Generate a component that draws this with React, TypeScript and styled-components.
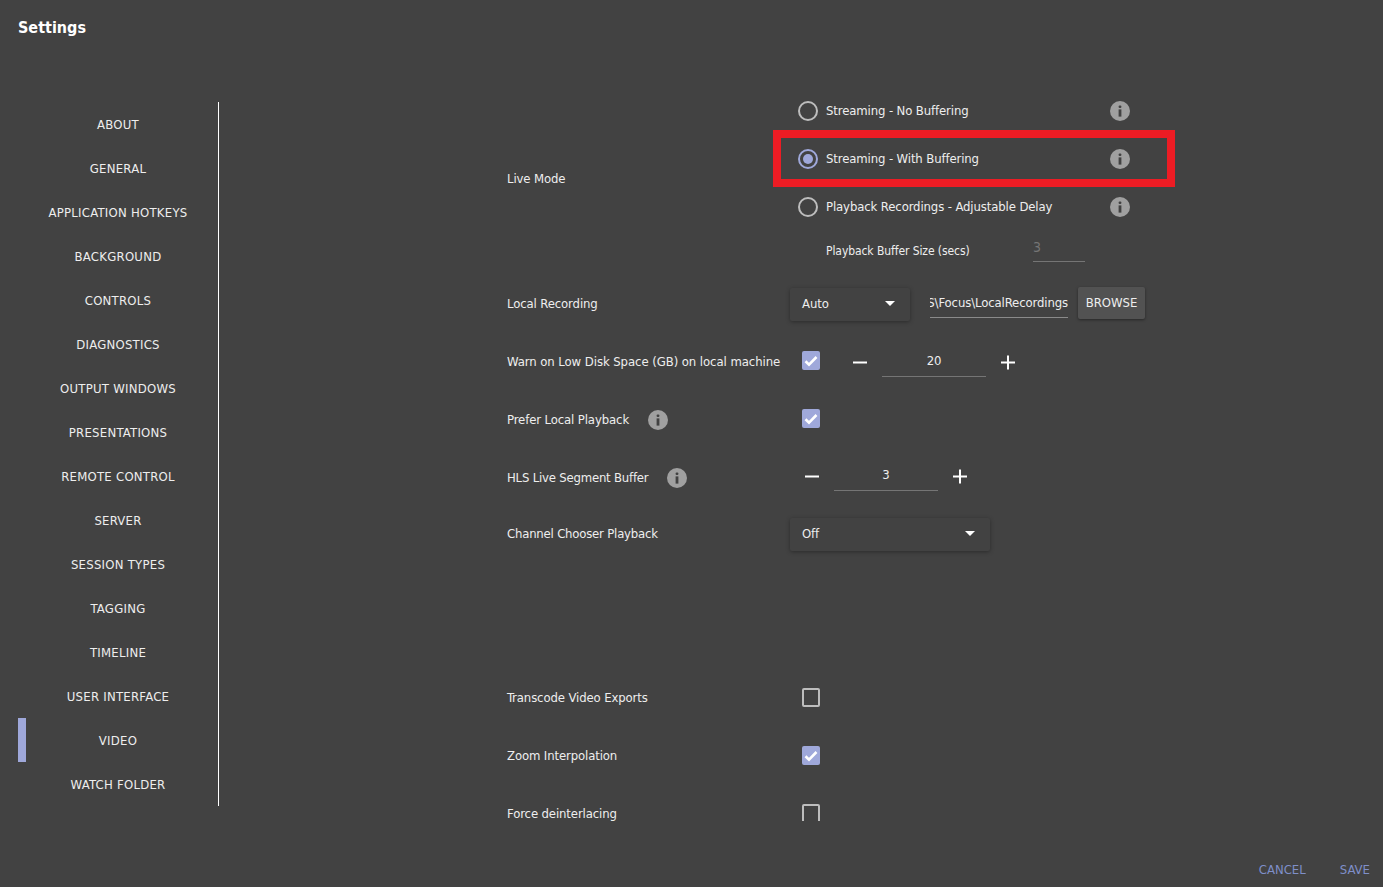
import React from 'react'
import styled, { createGlobalStyle } from 'styled-components';

const GlobalStyle = createGlobalStyle`
    html, body {
        margin: 0;
        padding: 0;
        background: #424242;
    }
    * {
        box-sizing: border-box;
    }
`

const Page = styled.div`
    width: 1383px;
    height: 887px;
    display: flex;
    flex-direction: column;
    overflow: hidden;
    background: #424242;
    color: #eeeeee;
    font-family: "DejaVu Sans", "Noto Sans", sans-serif;
    font-stretch: condensed;
    font-size: 13px;
    letter-spacing: -0.12px;
`

const Header = styled.h1`
    height: 87px;
    margin: 0;
    padding: 18px 0 0 18px;
    font-size: 16px;
    line-height: 20px;
    font-weight: 700;
    letter-spacing: 0;
    color: #ffffff;
`

const Body = styled.div`
    height: 734px;
    display: flex;
`

const Sidebar = styled.nav`
    width: 219px;
    height: 704px;
    margin-top: 15px;
    padding-left: 18px;
    border-right: 1px solid #ffffff;
    letter-spacing: 0.25px;
`

const NavItem = styled.div<{ $active?: boolean }>`
    height: 44px;
    display: flex;
    align-items: center;
    justify-content: center;
    border-left: 8px solid ${p => (p.$active ? '#9fa8da' : 'transparent')};
    padding-right: 8px;
`

const Content = styled.main`
    flex: 1;
    overflow: hidden;
    padding-left: 288px;
`

const Row = styled.div<{ $height: number; $after?: number }>`
    height: ${p => p.$height}px;
    margin-bottom: ${p => p.$after ?? 0}px;
    display: grid;
    grid-template-columns: 283px 1fr;
    align-items: center;
`

const Label = styled.div<{ $tracking?: number }>`
    display: flex;
    align-items: center;
    gap: 19px;
    padding-bottom: 1px;
    letter-spacing: ${p => p.$tracking ?? -0.12}px;
`

const Controls = styled.div<{ $inset?: number }>`
    display: flex;
    align-items: center;
    padding-left: ${p => p.$inset ?? 0}px;
`

const RadioRow = styled.div`
    position: relative;
    width: 340px;
    height: 48px;
    padding-left: 8px;
    display: flex;
    align-items: center;
`

const Highlight = styled.div`
    position: absolute;
    left: -17px;
    top: -5px;
    width: 402px;
    height: 57px;
    border: 8px solid #ed1c24;
    pointer-events: none;
`

const RadioCircle = styled.span<{ $checked?: boolean }>`
    width: 20px;
    height: 20px;
    margin-right: 8px;
    flex: none;
    display: flex;
    align-items: center;
    justify-content: center;
    border-radius: 50%;
    border: 2px solid ${p => (p.$checked ? '#9fa8da' : '#bdbdbd')};
    &::after {
        content: '';
        display: ${p => (p.$checked ? 'block' : 'none')};
        width: 10px;
        height: 10px;
        border-radius: 50%;
        background: #9fa8da;
    }
`

const RadioText = styled.span`
    flex: 1;
    padding-bottom: 1px;
`

const BufferRow = styled.div`
    height: 40px;
    padding-left: 36px;
    display: flex;
    align-items: center;
`

const BufferLabel = styled.span`
    width: 207px;
    font-size: 12px;
    letter-spacing: -0.08px;
`

const BufferInput = styled.div`
    width: 52px;
    height: 26px;
    margin-bottom: 5px;
    color: #757575;
    font-size: 14px;
    line-height: 22px;
    border-bottom: 1px solid #757575;
`

const Dropdown = styled.div<{ $width: number }>`
    width: ${p => p.$width}px;
    height: 33px;
    padding: 0 15px 1px 12px;
    display: flex;
    align-items: center;
    justify-content: space-between;
    border-radius: 2px;
    background: #424242;
    box-shadow: 0 1px 4px rgba(0, 0, 0, 0.35);
`

const Caret = styled.span`
    width: 0;
    height: 0;
    border-left: 5px solid transparent;
    border-right: 5px solid transparent;
    border-top: 5px solid #ffffff;
`

const PathInput = styled.div`
    width: 138px;
    height: 28px;
    margin: 0 10px 0 20px;
    overflow: hidden;
    display: flex;
    justify-content: flex-end;
    white-space: nowrap;
    line-height: 26px;
    border-bottom: 1px solid #8a8a8a;
`

const BrowseButton = styled.button`
    width: 67px;
    height: 32px;
    margin-bottom: 2px;
    padding: 0 0 1px;
    border: none;
    border-radius: 2px;
    font: inherit;
    letter-spacing: 0;
    color: #eeeeee;
    background: #525252;
    box-shadow: 0 1px 3px rgba(0, 0, 0, 0.4);
`

const Checkbox = styled.span<{ $checked?: boolean; $lift: number }>`
    width: 18px;
    height: 19px;
    margin-bottom: ${p => p.$lift}px;
    flex: none;
    display: flex;
    align-items: center;
    justify-content: center;
    border-radius: 2px;
    background: ${p => (p.$checked ? '#9fa8da' : 'transparent')};
    border: ${p => (p.$checked ? 'none' : '2px solid #bdbdbd')};
`

const Stepper = styled.div<{ $offset?: number; $lift?: number }>`
    margin-left: ${p => p.$offset ?? 0}px;
    margin-bottom: ${p => p.$lift ?? 0}px;
    display: flex;
    align-items: center;
    gap: 15px;
`

const StepValue = styled.div`
    width: 104px;
    height: 30px;
    margin-top: -1px;
    text-align: center;
    line-height: 27px;
    border-bottom: 1px solid #757575;
`

const Footer = styled.footer`
    height: 66px;
    padding: 40px 13px 0 0;
    display: flex;
    justify-content: flex-end;
    gap: 34px;
    letter-spacing: 0;
`

const FooterAction = styled.span`
    line-height: 18px;
    color: #7f8fc9;
`

const InfoWrap = styled.svg`
    flex: none;
    display: block;
`

const InfoIcon = () => (
    <InfoWrap width="20" height="20" viewBox="0 0 20 20">
        <circle cx="10" cy="10" r="10" fill="#a0a0a0" />
        <rect x="8.6" y="4.4" width="2.8" height="2.6" rx="1" fill="#424242" />
        <rect x="8.6" y="8.4" width="2.8" height="7.2" fill="#424242" />
    </InfoWrap>
)

const CheckMark = () => (
    <svg width="14" height="12" viewBox="0 0 14 12">
        <path d="M1.5 6.2 L5 9.6 L12.5 2" fill="none" stroke="#ffffff" strokeWidth="2.6" />
    </svg>
)

const Minus = () => (
    <svg width="14" height="15" viewBox="0 0 14 15">
        <path d="M0 7.5 H14" stroke="#ffffff" strokeWidth="2" />
    </svg>
)

const Plus = () => (
    <svg width="14" height="15" viewBox="0 0 14 15">
        <path d="M0 7.5 H14 M7 0.5 V14.5" stroke="#ffffff" strokeWidth="2" />
    </svg>
)

const navItems = [
    'ABOUT', 'GENERAL', 'APPLICATION HOTKEYS', 'BACKGROUND', 'CONTROLS', 'DIAGNOSTICS',
    'OUTPUT WINDOWS', 'PRESENTATIONS', 'REMOTE CONTROL', 'SERVER', 'SESSION TYPES',
    'TAGGING', 'TIMELINE', 'USER INTERFACE', 'VIDEO', 'WATCH FOLDER',
]

export default function App() {
    return (
        <Page>
            <GlobalStyle />
            <Header>Settings</Header>
            <Body>
                <Sidebar>
                    {navItems.map(item => <NavItem key={item} $active={item === 'VIDEO'}>{item}</NavItem>)}
                </Sidebar>
                <Content>
                    <Row $height={184} $after={4}>
                        <Label>Live Mode</Label>
                        <div>
                            <RadioRow>
                                <RadioCircle />
                                <RadioText>Streaming - No Buffering</RadioText>
                                <InfoIcon />
                            </RadioRow>
                            <RadioRow>
                                <RadioCircle $checked />
                                <RadioText>Streaming - With Buffering</RadioText>
                                <InfoIcon />
                                <Highlight />
                            </RadioRow>
                            <RadioRow>
                                <RadioCircle />
                                <RadioText>Playback Recordings - Adjustable Delay</RadioText>
                                <InfoIcon />
                            </RadioRow>
                            <BufferRow>
                                <BufferLabel>Playback Buffer Size (secs)</BufferLabel>
                                <BufferInput>3</BufferInput>
                            </BufferRow>
                        </div>
                    </Row>
                    <Row $height={58}>
                        <Label>Local Recording</Label>
                        <Controls>
                            <Dropdown $width={120}>Auto<Caret /></Dropdown>
                            <PathInput>S\Focus\LocalRecordings</PathInput>
                            <BrowseButton>BROWSE</BrowseButton>
                        </Controls>
                    </Row>
                    <Row $height={58}>
                        <Label $tracking={-0.07}>Warn on Low Disk Space (GB) on local machine</Label>
                        <Controls $inset={12}>
                            <Checkbox $checked $lift={3}><CheckMark /></Checkbox>
                            <Stepper $offset={33}>
                                <Minus />
                                <StepValue>20</StepValue>
                                <Plus />
                            </Stepper>
                        </Controls>
                    </Row>
                    <Row $height={58}>
                        <Label>Prefer Local Playback<InfoIcon /></Label>
                        <Controls $inset={12}>
                            <Checkbox $checked $lift={3}><CheckMark /></Checkbox>
                        </Controls>
                    </Row>
                    <Row $height={58}>
                        <Label $tracking={-0.2}>HLS Live Segment Buffer<InfoIcon /></Label>
                        <Controls>
                            <Stepper $offset={15} $lift={3}>
                                <Minus />
                                <StepValue>3</StepValue>
                                <Plus />
                            </Stepper>
                        </Controls>
                    </Row>
                    <Row $height={54}>
                        <Label $tracking={-0.2}>Channel Chooser Playback</Label>
                        <Controls>
                            <Dropdown $width={200}>Off<Caret /></Dropdown>
                        </Controls>
                    </Row>
                    <Row $height={108} />
                    <Row $height={58}>
                        <Label>Transcode Video Exports</Label>
                        <Controls $inset={12}><Checkbox $lift={1} /></Controls>
                    </Row>
                    <Row $height={58}>
                        <Label>Zoom Interpolation</Label>
                        <Controls $inset={12}><Checkbox $checked $lift={1}><CheckMark /></Checkbox></Controls>
                    </Row>
                    <Row $height={58}>
                        <Label>Force deinterlacing</Label>
                        <Controls $inset={12}><Checkbox $lift={1} /></Controls>
                    </Row>
                </Content>
            </Body>
            <Footer>
                <FooterAction>CANCEL</FooterAction>
                <FooterAction>SAVE</FooterAction>
            </Footer>
        </Page>
    )
}
